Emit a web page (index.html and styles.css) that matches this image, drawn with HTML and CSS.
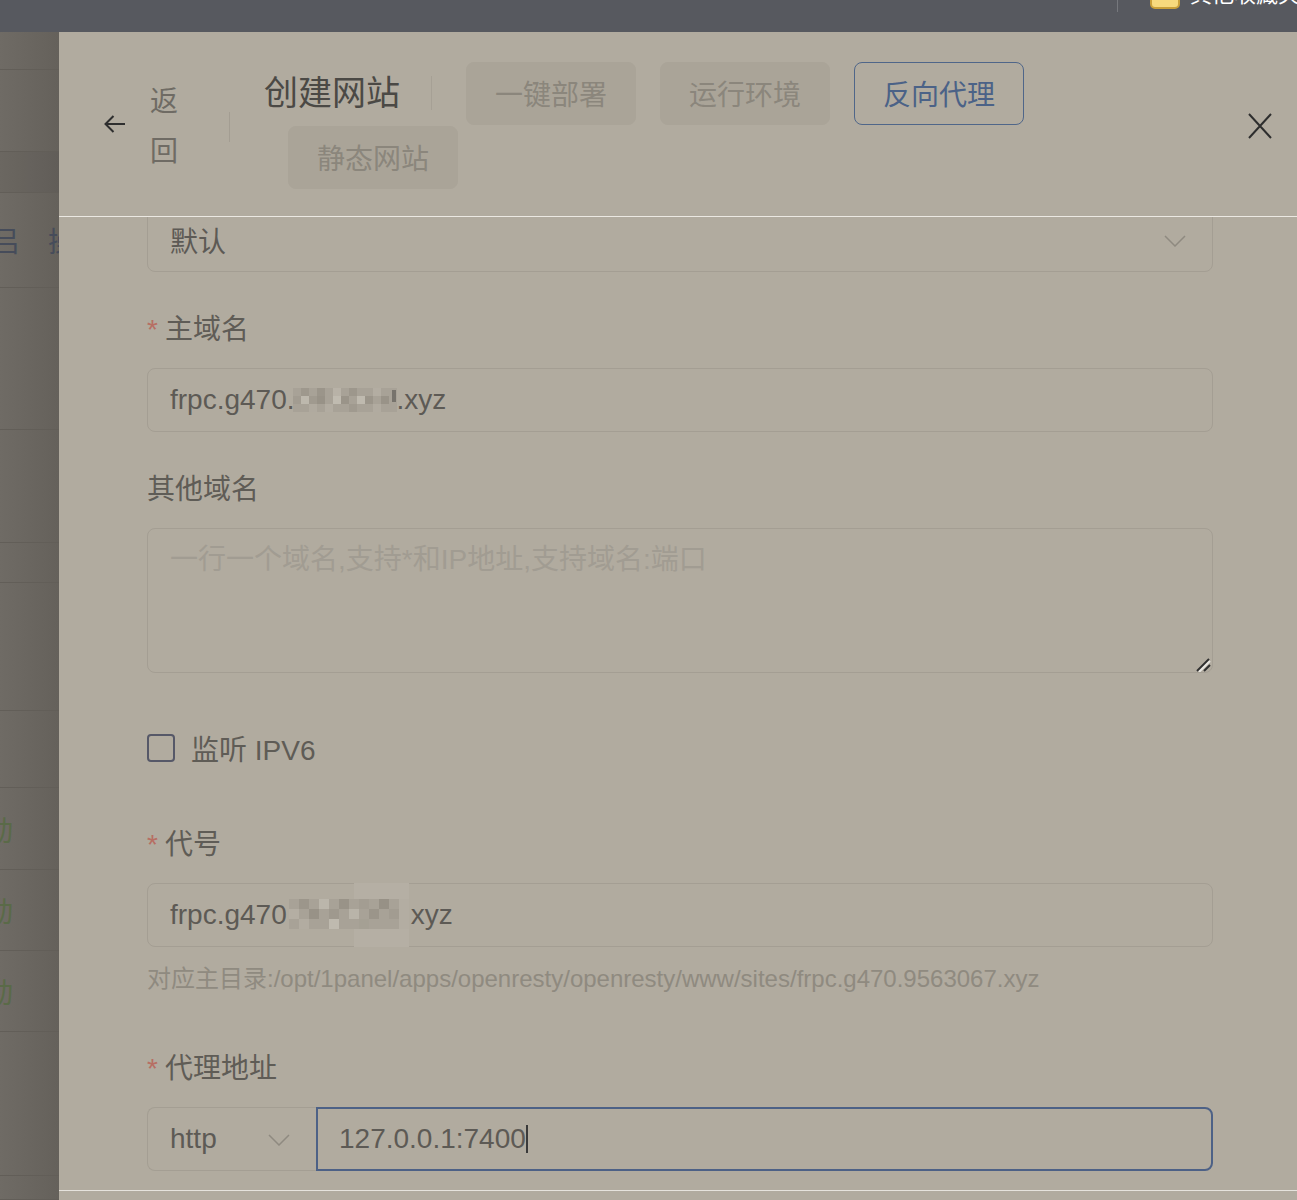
FILE: index.html
```html
<!DOCTYPE html>
<html lang="zh-CN">
<head>
    <meta charset="UTF-8">
    <meta name="viewport" content="width=device-width, initial-scale=1.0">
    <title>创建网站</title>
    <link rel="stylesheet" href="styles.css">
</head>
<body>
    <div class="topbar">
        <span class="bm-divider"></span>
        <span class="bm-folder"></span>
        <span class="bm-text">其他收藏夹</span>
    </div>

    <div class="screen">
        <!-- page behind the drawer, mostly covered -->
        <div class="backdrop">
            <div class="bd-row" style="height: 38px"></div>
            <div class="bd-row" style="height: 82px"></div>
            <div class="bd-row bd-dark" style="height: 41px"></div>
            <div class="bd-row" style="height: 95px">
                <span class="bd-head">吕</span>
                <span class="bd-sep"></span>
                <span class="bd-head">操</span>
            </div>
            <div class="bd-row" style="height: 142px"></div>
            <div class="bd-row" style="height: 113px"></div>
            <div class="bd-row" style="height: 40px"></div>
            <div class="bd-row" style="height: 128px"></div>
            <div class="bd-row" style="height: 77px"></div>
            <div class="bd-row" style="height: 82px"><span class="bd-status">动</span></div>
            <div class="bd-row" style="height: 81px"><span class="bd-status">动</span></div>
            <div class="bd-row" style="height: 81px"><span class="bd-status">动</span></div>
            <div class="bd-row" style="height: 144px"></div>
            <div class="bd-row" style="height: 24px"></div>
        </div>

        <div class="drawer">
            <div class="drawer-header">
                <div class="back">
                    <svg width="24" height="24" viewBox="0 0 24 24" fill="none" stroke="#2f2f2f" stroke-width="2">
                        <path d="M22 12H2.5M10.5 4L2.5 12l8 8"/>
                    </svg>
                    <span class="back-text">返回</span>
                </div>
                <span class="vdivider"></span>
                <div class="title-group">
                    <span class="title">创建网站</span>
                    <span class="title-divider"></span>
                    <button class="tab">一键部署</button>
                    <button class="tab">运行环境</button>
                    <button class="tab active">反向代理</button>
                    <button class="tab">静态网站</button>
                </div>
                <button class="close">
                    <svg width="24" height="26" viewBox="0 0 24 26" fill="none" stroke="#2e2e2e" stroke-width="2">
                        <path d="M1 1l22 24M23 1L1 25"/>
                    </svg>
                </button>
            </div>

            <div class="drawer-body">
                <div class="form">
                    <div class="field">
                        <div class="input select">
                            <span class="value">默认</span>
                            <svg class="chevron" width="22" height="12" viewBox="0 0 22 12" fill="none" stroke="#8f8a80" stroke-width="1.5">
                                <path d="M1 1l10 10 10-10"/>
                            </svg>
                        </div>
                    </div>

                    <div class="field">
                        <label class="label"><span class="req">*</span>主域名</label>
                        <div class="input">
                            <span class="value">frpc.g470.</span>
                            <svg class="mosaic" width="104" height="24" viewBox="0 0 104 24">
                                <rect x="0" y="0" width="104" height="24" fill="#a8a297"/>
                                <rect x="8" y="0" width="8" height="8" fill="#9e988d"/>
                                <rect x="24" y="0" width="8" height="8" fill="#9b958a"/>
                                <rect x="40" y="0" width="8" height="8" fill="#b8b2a7"/>
                                <rect x="56" y="0" width="8" height="8" fill="#9d978c"/>
                                <rect x="80" y="0" width="8" height="8" fill="#b3ada2"/>
                                <rect x="0" y="8" width="8" height="8" fill="#a29c91"/>
                                <rect x="8" y="8" width="8" height="8" fill="#bdb8ad"/>
                                <rect x="16" y="8" width="8" height="8" fill="#a09a8f"/>
                                <rect x="24" y="8" width="8" height="8" fill="#989287"/>
                                <rect x="40" y="8" width="8" height="8" fill="#c0bbb0"/>
                                <rect x="48" y="8" width="8" height="8" fill="#9a9489"/>
                                <rect x="64" y="8" width="8" height="8" fill="#bfbaaf"/>
                                <rect x="72" y="8" width="8" height="8" fill="#9b958a"/>
                                <rect x="88" y="8" width="8" height="8" fill="#999388"/>
                                <rect x="16" y="16" width="8" height="8" fill="#b0aa9f"/>
                                <rect x="32" y="16" width="8" height="8" fill="#b2aca1"/>
                                <rect x="56" y="16" width="8" height="8" fill="#a09a8f"/>
                                <rect x="80" y="16" width="8" height="8" fill="#b1aba0"/>
                                <rect x="99" y="2" width="4" height="12" fill="#77736c"/>
                            </svg>
                            <span class="value">.xyz</span>
                        </div>
                    </div>

                    <div class="field">
                        <label class="label">其他域名</label>
                        <div class="input textarea">
                            <span class="placeholder">一行一个域名,支持*和IP地址,支持域名:端口</span>
                            <svg class="resize" width="16" height="14" viewBox="0 0 16 14" fill="none" stroke-width="2">
                                <path d="M1 13L13 1" stroke="#2f2f2f"/>
                                <path d="M3 14L14 3" stroke="#e8e6e1"/>
                                <path d="M8 13L14 7" stroke="#2f2f2f"/>
                            </svg>
                        </div>
                    </div>

                    <div class="field check-field">
                        <span class="checkbox"></span>
                        <span class="check-label">监听 IPV6</span>
                    </div>

                    <div class="field">
                        <label class="label"><span class="req">*</span>代号</label>
                        <div class="input">
                            <span class="value">frpc.g470</span>
                            <svg class="mosaic tall" width="120" height="64" viewBox="0 0 120 64">
                                <rect x="65" y="0" width="55" height="64" fill="#b5afa4"/>
                                <rect x="0" y="16" width="120" height="30" fill="#a8a297"/>
                                <rect x="10" y="16" width="10" height="10" fill="#9c968b"/>
                                <rect x="30" y="16" width="10" height="10" fill="#bbb6ab"/>
                                <rect x="50" y="16" width="10" height="10" fill="#999388"/>
                                <rect x="70" y="16" width="10" height="10" fill="#a39d92"/>
                                <rect x="90" y="16" width="10" height="10" fill="#979186"/>
                                <rect x="0" y="26" width="10" height="10" fill="#b4aea3"/>
                                <rect x="20" y="26" width="10" height="10" fill="#989287"/>
                                <rect x="40" y="26" width="10" height="10" fill="#9f998e"/>
                                <rect x="60" y="26" width="10" height="10" fill="#b9b4a9"/>
                                <rect x="80" y="26" width="10" height="10" fill="#9b958a"/>
                                <rect x="100" y="26" width="10" height="10" fill="#a29c91"/>
                                <rect x="10" y="36" width="10" height="10" fill="#b2aca1"/>
                                <rect x="40" y="36" width="10" height="10" fill="#bfbaaf"/>
                                <rect x="70" y="36" width="10" height="10" fill="#a5a094"/>
                                <rect x="110" y="16" width="10" height="30" fill="#b3ada2"/>
                            </svg>
                            <span class="value">xyz</span>
                        </div>
                        <div class="help">对应主目录:/opt/1panel/apps/openresty/openresty/www/sites/frpc.g470.9563067.xyz</div>
                    </div>

                    <div class="field">
                        <label class="label"><span class="req">*</span>代理地址</label>
                        <div class="proxy-row">
                            <div class="input select proto">
                                <span class="value">http</span>
                                <svg class="chevron" width="22" height="12" viewBox="0 0 22 12" fill="none" stroke="#8f8a80" stroke-width="1.5">
                                    <path d="M1 1l10 10 10-10"/>
                                </svg>
                            </div>
                            <div class="input focused">
                                <span class="value">127.0.0.1:7400</span><span class="caret"></span>
                            </div>
                        </div>
                    </div>
                </div>
            </div>

            <div class="drawer-footer"></div>
        </div>
    </div>
</body>
</html>
```

FILE: styles.css
```css
body {
    margin: 0;
    height: 1200px;
    overflow: hidden;
    font-family: "Liberation Sans", "Noto Sans CJK SC", sans-serif;
    background-color: #57595f;
}

/* browser bookmark bar, cut off at the top */
.topbar {
    height: 32px;
    background-color: #57595f;
    display: flex;
    justify-content: flex-end;
    align-items: flex-start;
    overflow: hidden;
}

.bm-divider {
    width: 1px;
    height: 26px;
    margin-top: -14px;
    margin-right: 32px;
    background-color: #76787d;
}

.bm-folder {
    width: 30px;
    height: 24px;
    margin-top: -15px;
    margin-right: 10px;
    box-sizing: border-box;
    border: 2px solid #caa03a;
    border-radius: 5px;
    background-color: #f7d97d;
}

.bm-text {
    width: 107px;
    margin-top: -18px;
    font-size: 22px;
    line-height: 26px;
    color: #fff;
    white-space: nowrap;
    overflow: hidden;
}

.screen {
    display: flex;
    height: 1168px;
}

/* dimmed page on the left */
.backdrop {
    width: 59px;
    flex: none;
    overflow: hidden;
    display: flex;
    flex-direction: column;
    background: linear-gradient(90deg, #6f6b65, #65615b);
}

.bd-row {
    box-sizing: border-box;
    flex: none;
    display: flex;
    align-items: center;
    border-bottom: 1px solid #625e58;
    font-size: 28px;
    white-space: nowrap;
}

.bd-dark {
    background-color: rgba(0, 0, 0, 0.03);
}

.bd-head {
    color: #464c5a;
    margin-left: -8px;
}

.bd-sep {
    width: 1px;
    height: 22px;
    margin: 0 14px 0 22px;
    background-color: #5f5c57;
}

.bd-status {
    color: #5a6a48;
    margin-left: -15px;
}

/* drawer */
.drawer {
    flex: 1;
    display: flex;
    flex-direction: column;
    background-color: #b1ab9f;
}

.drawer-header {
    height: 184px;
    flex: none;
    display: flex;
    align-items: center;
    padding: 0 25px 0 44px;
    border-bottom: 1px solid #ebe8e2;
}

.back {
    display: flex;
    align-items: center;
}

.back-text {
    width: 28px;
    margin-left: 23px;
    padding-top: 6px;
    font-size: 28px;
    line-height: 50px;
    color: #6f6b64;
}

.vdivider {
    width: 1px;
    height: 30px;
    margin-left: 51px;
    margin-top: 6px;
    background-color: #a39d92;
}

.title-group {
    width: 900px;
    margin-left: 34px;
    display: flex;
    flex-wrap: wrap;
    align-items: center;
    row-gap: 1px;
    padding-top: 2px;
}

.title {
    font-size: 34px;
    line-height: 63px;
    color: #4b4945;
}

.title-divider {
    width: 1px;
    height: 34px;
    margin: 0 10px 0 31px;
    background-color: #a6a095;
}

.tab {
    height: 63px;
    margin-left: 24px;
    padding: 0 28px;
    border: 1px solid #aaa498;
    border-radius: 8px;
    background-color: #aaa498;
    font-family: inherit;
    font-size: 28px;
    color: #8b867c;
    cursor: pointer;
}

.tab.active {
    background-color: transparent;
    border-color: #4f6689;
    color: #4b6287;
}

.close {
    margin-left: auto;
    margin-top: 3px;
    padding: 0;
    border: none;
    background: none;
    display: flex;
    cursor: pointer;
}

.drawer-body {
    height: 973px;
    flex: none;
    overflow: hidden;
    padding: 0 84px 0 88px;
}

/* content is scrolled down a little */
.form {
    margin-top: -9px;
}

.field {
    margin-bottom: 36px;
}

.label {
    display: block;
    margin-bottom: 16px;
    font-size: 28px;
    line-height: 44px;
    color: #5f5c56;
}

.req {
    color: #b76e63;
    margin-right: 7px;
}

.input {
    box-sizing: border-box;
    height: 64px;
    display: flex;
    align-items: center;
    padding: 0 22px;
    border: 1px solid #a49e93;
    border-radius: 8px;
    font-size: 28px;
    color: #5d5a55;
    white-space: nowrap;
}

.select .chevron {
    margin-left: auto;
    margin-right: 4px;
    margin-top: 2px;
}

.mosaic {
    flex: none;
    margin-left: -2px;
}

.mosaic.tall {
    margin: -1px 2px -1px 2px;
}

.textarea {
    position: relative;
    height: 145px;
    align-items: flex-start;
    padding-top: 10px;
    line-height: 42px;
}

.placeholder {
    color: #a19c92;
}

.resize {
    position: absolute;
    right: 0;
    bottom: 0;
}

.check-field {
    height: 78px;
    display: flex;
    align-items: center;
}

.checkbox {
    box-sizing: border-box;
    width: 28px;
    height: 28px;
    border: 2px solid #565868;
    border-radius: 4px;
}

.check-label {
    margin-left: 16px;
    font-size: 28px;
    color: #5f5c56;
}

.help {
    padding: 8px 0;
    font-size: 24px;
    line-height: 48px;
    color: #8f8a80;
    white-space: nowrap;
}

.proxy-row {
    display: flex;
}

.proto {
    width: 169px;
    flex: none;
    border-right: none;
    border-radius: 8px 0 0 8px;
}

.focused {
    flex: 1;
    padding-left: 21px;
    border: 2px solid #4d6186;
    border-radius: 0 8px 8px 0;
}

.caret {
    width: 2px;
    height: 28px;
    background-color: #3a3a3a;
}

.drawer-footer {
    flex: 1;
    border-top: 1px solid #e6e3dd;
}
```
